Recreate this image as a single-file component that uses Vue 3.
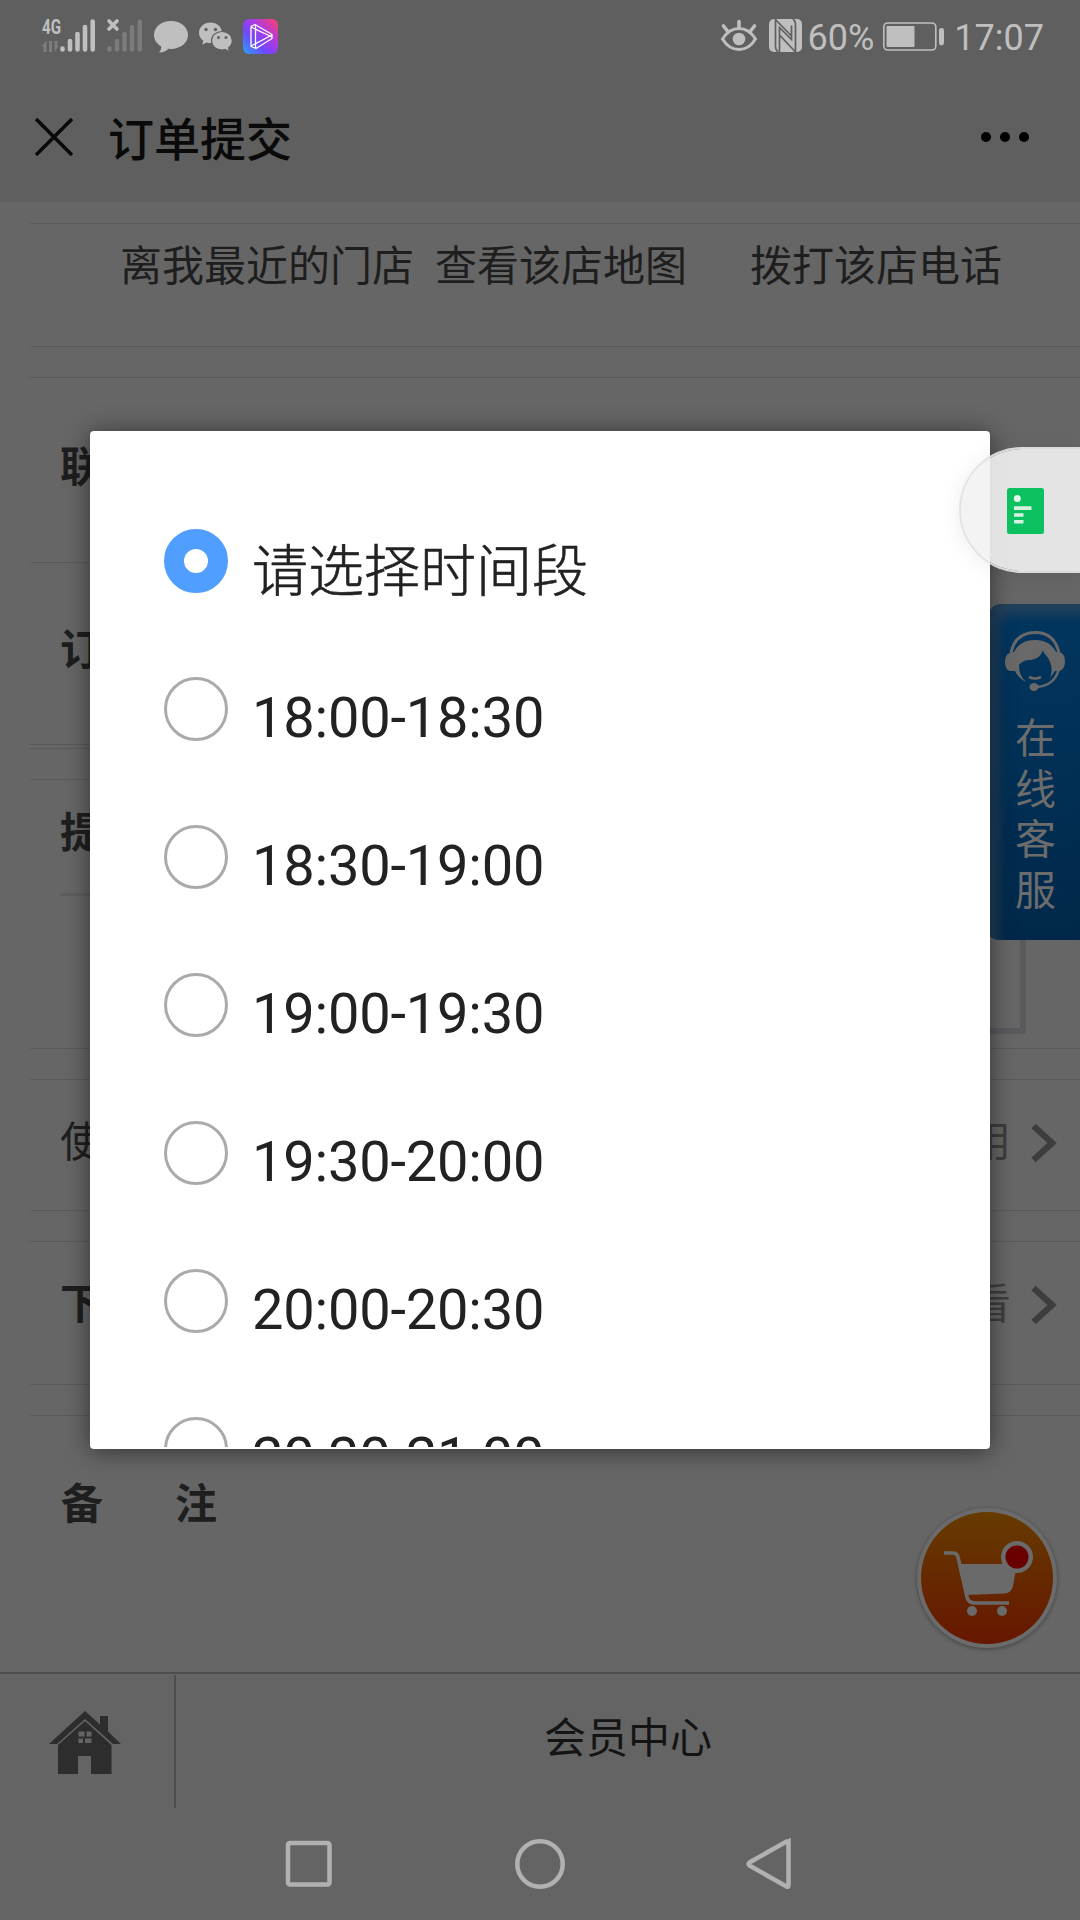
<template>
<div class="screen">
  <header class="status">
    <svg class="status-left" width="250" height="40" viewBox="36 16 250 40">
      <text x="42" y="34" class="net" textLength="19" lengthAdjust="spacingAndGlyphs">4G</text>
      <path d="M41.500 46.500l5-6V52h-3v-5.500zM49 41h3v11h-3zM54.500 41h3v5l1.500-.5-4.500 6.500z" fill="#7d7d7d"/>
      <g stroke="#bfbfbf" stroke-width="4.600" stroke-linecap="round">
        <path d="M62.500 48.500v1M70 41v8.500M77.500 34v15.500M85 27v22.500M92.700 21.500v28"/>
      </g>
      <g stroke="#7b7b7b" stroke-width="4.600" stroke-linecap="round">
        <path d="M109.500 48.500v1M117 41v8.500M124.500 34v15.500M132 27v22.500M139.700 21.500v28"/>
      </g>
      <path d="M109 21l8 8M117 21l-8 8" stroke="#bfbfbf" stroke-width="3.600" stroke-linecap="round"/>
      <path d="M171 21c-9.500 0-17 6-17 14 0 5 3 9 7.300 11.500 0 2.500-.8 4.500-2.300 6 4 0 7.500-1.500 9.500-3.700 11 1 19.500-5.300 19.500-13.800 0-8-7.500-14-17-14z" fill="#bfbfbf"/>
      <path d="M210.500 22.500c-6.300 0-11.500 4.500-11.500 10.300 0 3.300 1.700 6.200 4.300 8l-1 4 4.500-2.300c1.200.4 2.500.5 3.700.5 6.500 0 11.500-4.500 11.500-10.200 0-5.800-5-10.300-11.500-10.300z" fill="#bfbfbf"/>
      <circle cx="206" cy="29.500" r="1.700" fill="#5f5f5f"/>
      <circle cx="215.500" cy="29.500" r="1.700" fill="#5f5f5f"/>
      <path d="M222 31.500c-6 0-10.500 4-10.500 9.300s4.500 9.200 10.500 9.200c1.200 0 2.300-.2 3.300-.5l4.200 2.200-.9-3.900c2.300-1.700 3.700-4.200 3.700-7 0-5.300-4.500-9.300-10.300-9.300z" fill="#bfbfbf" stroke="#5f5f5f" stroke-width="1.200"/>
      <circle cx="218.500" cy="37.500" r="1.500" fill="#5f5f5f"/>
      <circle cx="226" cy="37.500" r="1.500" fill="#5f5f5f"/>
      <defs>
        <linearGradient id="video-fill" x1="0" y1="1" x2="1" y2="0">
          <stop offset="0" stop-color="#26a5ff"/>
          <stop offset=".35" stop-color="#7148fb"/>
          <stop offset=".6" stop-color="#a63be8"/>
          <stop offset="1" stop-color="#ff3f6c"/>
        </linearGradient>
      </defs>
      <rect x="243" y="19" width="35" height="35" rx="6" fill="url(#video-fill)"/>
      <path d="M251 26.500l4-2 17 10v4l-16 10-5-2zM255.500 24.500v24M251 27l21 10M251 46l21-11" fill="none" stroke="#fff" stroke-width="1.300" stroke-linejoin="round"/>
    </svg>
    <div class="status-right">
      <svg width="84" height="36" viewBox="720 18 84 36">
        <path d="M722.500 40c4-6.500 9.500-10.500 16.500-10.500s12.500 4 16.500 10.500c-4 6.500-9.500 10.500-16.500 10.500s-12.500-4-16.500-10.500z" fill="none" stroke="#bfbfbf" stroke-width="3"/>
        <circle cx="739" cy="40" r="6.300" fill="#bfbfbf"/>
        <path d="M739 28v-5.500M727.500 32l-4-5M750.500 32l4-5" stroke="#bfbfbf" stroke-width="3.600" stroke-linecap="round"/>
        <rect x="769" y="20" width="33" height="33" rx="5" fill="#bfbfbf"/>
        <path d="M775.500 20v28q0 3 2.500 5M795.500 53v-28q0-3-2.500-5M775.500 20.500l16 16.500M779.500 53v-24.500l12 12v-14M779.500 36l15.500 16.500" fill="none" stroke="#5f5f5f" stroke-width="1.700"/>
      </svg>
      <span class="percent">60%</span>
      <svg class="battery" width="62" height="30" viewBox="884 22 62 30">
        <rect x="884.800" y="23" width="52" height="27" rx="4" fill="none" stroke="#bfbfbf" stroke-width="1.600"/>
        <rect x="887.500" y="26" width="28" height="21" rx="1" fill="#bfbfbf"/>
        <rect x="940" y="28" width="5" height="17.500" rx="2.400" fill="#bfbfbf"/>
      </svg>
      <span class="time">17:07</span>
    </div>
  </header>

  <div class="titlebar">
    <svg width="38" height="38" viewBox="0 0 38 38">
      <path d="M1 1l36 36M37 1L1 37" stroke="#0a0a0a" stroke-width="3.600"/>
    </svg>
    <h1>订单提交</h1>
    <svg class="more" width="50" height="12" viewBox="0 0 50 12">
      <circle v-for="x in [6, 25, 44]" :key="x" :cx="x" cy="6" r="5" fill="#000"/>
    </svg>
  </div>

  <main class="content">
    <section class="stores">
      <span v-for="link in storeLinks" :key="link">{{link}}</span>
    </section>
    <section class="row contact"><b>联</b></section>
    <section class="row order"><b>订</b></section>
    <section class="row pickup">
      <b>提</b>
      <div class="box"></div>
    </section>
    <section v-for="row in arrowRows" :key="row.label" class="row arrow" :class="{strong: row.strong}">
      <span>{{row.label}}</span>
      <span class="value">{{row.value}}</span>
      <svg width="26" height="40" viewBox="0 0 26 40">
        <path d="M2.500 3L21 20 2.500 37" fill="none" stroke="#3d3d3d" stroke-width="6.400"/>
      </svg>
    </section>
    <section class="row remark"><b>备</b><b>注</b></section>
  </main>

  <footer class="tabbar">
    <div class="home">
      <svg width="72" height="64" viewBox="0 0 72 64">
        <path d="M0 33L36 0l15 13.500V5h8v15.500L72 33h-8L36 8 8 33z" fill="#2d2d2d"/>
        <path d="M9 34L36 10l26.500 24v29H42V45H29v18H9z" fill="#2d2d2d"/>
        <path d="M29.500 20.500h6v5h-6zM37.500 20.500h5v5h-5zM29.500 27.500h4.500v4.500h-4.500zM36 27.500h6.500v4.500H36z" fill="#646464"/>
      </svg>
    </div>
    <div class="member">会员中心</div>
  </footer>

  <nav class="navbar">
    <svg width="52" height="52" viewBox="0 0 52 52"><rect x="5" y="5" width="41.500" height="41.500" rx="2"/></svg>
    <svg width="52" height="52" viewBox="0 0 52 52"><circle cx="26" cy="26" r="22.700"/></svg>
    <svg width="52" height="52" viewBox="0 0 52 52"><path d="M43 5Q44 2.500 41.500 3.500L4.500 24.500q-2 1.500 0 3L41.500 48.500q2 1 2-1.500V4.500z"/></svg>
  </nav>

  <aside class="service">
    <svg width="62" height="62" viewBox="0 0 62 62">
      <path d="M7 23C10 9 19 2.500 31 2.500S52 9 55 23" fill="none" stroke="#696969" stroke-width="3"/>
      <path d="M10 22C14 14 21 10 31 10s17 4 21 12q9-1 9 9 0 9-6 10h-4l-5 7c3-9 2-16-5-24-1-1-2-2-2-4-2 6-6 9-12 10-6 0-10 2-12 5 0 7 2 12 7 17-6-3-9-7-11-11H6q-5-1-5-9 0-10 9-10z" fill="#696969"/>
      <path d="M55 38c-2 10-9 18-22 19M25 47q6 3 12 0" fill="none" stroke="#696969" stroke-width="2.600"/>
      <ellipse cx="30" cy="57" rx="4.600" ry="4" fill="#696969"/>
    </svg>
    <span class="service-text">在线客服</span>
  </aside>

  <svg class="cart" width="148" height="148" viewBox="0 0 148 148">
    <defs>
      <linearGradient id="fire" x1="0" y1="0" x2="0" y2="1">
        <stop offset="0" stop-color="#663b00"/>
        <stop offset="1" stop-color="#661700"/>
      </linearGradient>
    </defs>
    <circle class="ring" cx="74" cy="74" r="70" fill="#6b6b6b"/>
    <circle cx="74" cy="74" r="66" fill="url(#fire)"/>
    <path d="M31 49h9q4 0 5 4l9 40q1.500 6 8 6h34" fill="none" stroke="#6a6a6a" stroke-width="3.600"/>
    <path d="M45 60h59l-4 22q-1.500 7-8 7.500L53 91z" fill="#6a6a6a"/>
    <circle cx="59" cy="107" r="5" fill="#6a6a6a"/>
    <circle cx="89" cy="107" r="5" fill="#6a6a6a"/>
    <circle cx="104" cy="53" r="16" fill="#6b6b6b"/>
    <circle cx="104" cy="53" r="11.500" fill="#6b0000"/>
  </svg>

  <div class="dialog">
    <div class="options">
      <label v-for="slot in slots" :key="slot" class="option">
        <span class="radio" :class="{checked: slot === selected}" @click="selected = slot"></span>
        <span class="text" :class="{cjk: slot === slots[0]}">{{slot}}</span>
      </label>
    </div>
  </div>

  <div class="floating">
    <svg width="37" height="46" viewBox="0 0 37 46">
      <rect width="37" height="46" rx="2.500" fill="#0bc160"/>
      <circle cx="10.300" cy="10.500" r="3.500" fill="#e4f5ea"/>
      <path d="M7 18.300h17.500v3.600H7zM7 25.200h9.500v3.600H7zM7 32h9.500v3.600H7z" fill="#d5f2e0"/>
    </svg>
  </div>
</div>
</template>

<script setup>
import {ref} from "vue";

const storeLinks = ["离我最近的门店", "查看该店地图", "拨打该店电话"];

const arrowRows = [
  {label: "使", value: "用", strong: false},
  {label: "下", value: "看", strong: true},
];

const slots = [
  "请选择时间段",
  "18:00-18:30",
  "18:30-19:00",
  "19:00-19:30",
  "19:30-20:00",
  "20:00-20:30",
  "20:30-21:00",
];

const selected = ref(slots[0]);
</script>

<style>
body {
  margin: 0;
  background: #666;
}
</style>

<style scoped>
.screen {
  position: relative;
  width: 1080px;
  height: 1920px;
  overflow: hidden;
  display: flex;
  flex-direction: column;
  background: #666;
  color: #1e1e1e;
  font-family: "Noto Sans CJK SC", sans-serif;
  font-size: 42px;
  line-height: 60px;
}

.screen * {
  box-sizing: border-box;
}

svg {
  display: block;
  flex: none;
}

.status {
  height: 72px;
  flex: none;
  display: flex;
  justify-content: space-between;
  padding: 16px 36px 0 36px;
  background: #5f5f5f;
  color: #bfbfbf;
  font-family: Roboto, sans-serif;
  font-size: 36px;
  line-height: 42px;
}

.net {
  font-family: Roboto, sans-serif;
  font-size: 20px;
  font-weight: bold;
  fill: #bfbfbf;
}

.status-right {
  display: flex;
  padding-top: 1px;
}

.percent {
  margin-left: 4px;
}

.battery {
  margin: 5px 9px 0 9px;
}

.titlebar {
  height: 130px;
  flex: none;
  display: flex;
  align-items: center;
  padding: 0 50px 0 35px;
  background: #5f5f5f;
}

h1 {
  margin: -2px auto 0 35px;
  font-size: 46px;
  font-weight: 500;
  color: #0a0a0a;
}

.content {
  height: 1470px;
  flex: none;
  padding: 21px 0 0 30px;
}

.stores {
  height: 124px;
  padding: 9px 0 0 90px;
  border-top: 1px solid #5a5a5a;
  border-bottom: 1px solid #5a5a5a;
  display: grid;
  grid-template-columns: 315px 315px 315px;
}

.row {
  display: flex;
  padding-left: 30px;
  border-top: 1px solid #5a5a5a;
}

.contact {
  margin-top: 30px;
  height: 185px;
  padding-top: 56px;
}

.order {
  height: 187px;
  padding-top: 54px;
  border-bottom: 1px solid #5a5a5a;
  box-shadow: inset 0 -3px #666, inset 0 -4px #5a5a5a;
}

.pickup {
  margin-top: 30px;
  height: 270px;
  padding-top: 20px;
  flex-direction: column;
  border-bottom: 1px solid #5a5a5a;
}

.pickup b {
  height: 96px;
  border-bottom: 3px solid #5e5e5e;
}

.box {
  width: 906px;
  height: 118px;
  margin: 20px 0 0 60px;
  border: 6px solid #5a5a5e;
}

.arrow {
  height: 132px;
  margin-top: 30px;
  padding: 29px 23px 0 30px;
  border-bottom: 1px solid #5a5a5a;
}

.arrow svg {
  margin-top: 14px;
}

.strong {
  height: 144px;
}

.strong > span:first-child {
  font-weight: bold;
}

.value {
  margin: 0 20px 0 auto;
  color: #3d3d3d;
}

.remark {
  margin-top: 30px;
  padding: 55px 0 0 31px;
  gap: 72px;
}

.tabbar {
  height: 136px;
  flex: none;
  display: flex;
  border-top: 2px solid #4e4e4e;
  background: #646464;
  color: #141414;
}

.home {
  width: 176px;
  margin-top: 1px;
  padding: 36px 0 0 49px;
  border-right: 2px solid #4e4e4e;
}

.member {
  flex: 1;
  text-align: center;
  padding-top: 31px;
}

.navbar {
  flex: 1;
  display: flex;
  justify-content: center;
  gap: 179px;
  padding-top: 30px;
  background: #646464;
}

.navbar svg {
  fill: none;
  stroke: #b1b1b1;
  stroke-width: 4.5;
}

.service {
  position: absolute;
  top: 604px;
  right: 0;
  width: 92px;
  height: 336px;
  padding: 26px 0 0 2px;
  display: flex;
  flex-direction: column;
  align-items: center;
  border-radius: 14px 0 0 10px;
  background: linear-gradient(#02365f, #00284a);
  box-shadow: inset 10px 10px 12px #24425c;
  color: #6c6c6c;
}

.service-text {
  margin: 25px 0 0 1px;
  writing-mode: vertical-rl;
  white-space: nowrap;
  letter-spacing: 9.5px;
  font-size: 41px;
}

.cart {
  position: absolute;
  left: 913px;
  top: 1504px;
}

.ring {
  filter: drop-shadow(0 1px 2px rgba(0, 0, 0, .35));
}

.dialog {
  position: absolute;
  left: 90px;
  top: 431px;
  width: 900px;
  height: 1018px;
  padding: 98px 0 2px 74px;
  border-radius: 4px;
  background: #fff;
  box-shadow: 0 2px 24px rgba(0, 0, 0, .5);
}

.options {
  height: 918px;
  overflow: hidden;
}

.option {
  height: 148px;
  display: flex;
}

.radio {
  width: 64px;
  height: 64px;
  flex: none;
  border: 3px solid #aaa;
  border-radius: 50%;
}

.radio.checked {
  border: 20px solid #509eff;
}

.text {
  margin-left: 24px;
  padding-top: 2px;
  color: #222;
  font-family: Roboto, sans-serif;
  font-size: 56px;
  letter-spacing: -.2px;
  line-height: 78px;
}

.text.cjk {
  padding-top: 0;
  font-family: "Noto Sans CJK SC", sans-serif;
  font-weight: 300;
  letter-spacing: 0;
  line-height: 76px;
  -webkit-text-stroke: .6px #222;
}

.floating {
  position: absolute;
  left: 959px;
  top: 447px;
  width: 121px;
  height: 126px;
  padding: 39px 0 0 46px;
  border: 2px solid rgba(226, 226, 226, .95);
  border-right: 0;
  border-radius: 63px 0 0 63px;
  background: rgba(242, 242, 242, .9);
  background-clip: padding-box;
  box-shadow: 0 2px 20px rgba(0, 0, 0, .08);
}
</style>
